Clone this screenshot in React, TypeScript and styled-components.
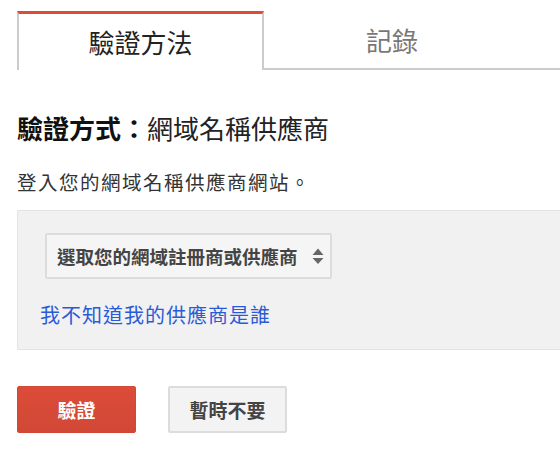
import React from "react";
import styled, { createGlobalStyle } from "styled-components";

const Global = createGlobalStyle`
  html, body { margin: 0; padding: 0; background: #fff; overflow: hidden; }
  body { font-family: "Noto Sans CJK TC", "Noto Sans", sans-serif; width: 560px; height: 450px; }
`;

const Page = styled.div`
  padding: 11px 0 0 17px;
`;

const Tabs = styled.div`
  display: flex;
  align-items: flex-end;
  height: 57px;
  border-bottom: 2px solid #ccc;
`;

const Tab = styled.div<{ $active?: boolean }>`
  box-sizing: border-box;
  display: flex;
  align-items: center;
  justify-content: center;
  font-size: 26px;
  height: 100%;
  ${(p) =>
    p.$active
      ? `
    width: 247px;
    height: 59px;
    margin-bottom: -2px;
    background: #fff;
    border-top: 3px solid #dd4b39;
    border-left: 2px solid #ccc;
    border-right: 2px solid #ccc;
    color: #222;
    padding-bottom: 2px;
  `
      : `
    width: 256px;
    color: #777;
  `}
`;

const Heading = styled.h2`
  margin: 40px 0 0 0;
  font-size: 26px;
  font-weight: normal;
  line-height: 36px;
  color: #222;
`;

const Strong = styled.span`
  font-weight: bold;
  color: #111;
`;

const Desc = styled.p`
  margin: 22px 0 0 0;
  font-size: 19.5px;
  letter-spacing: 1.5px;
  line-height: 28px;
  color: #333;
`;

const Box = styled.div`
  box-sizing: border-box;
  margin-top: 14px;
  height: 140px;
  background: #f1f1f1;
  border: 1px solid #e3e3e3;
  border-right: none;
  padding: 22px 0 0 22px;
`;

const Select = styled.div`
  box-sizing: border-box;
  display: flex;
  align-items: center;
  justify-content: space-between;
  margin-left: 5px;
  width: 287px;
  height: 46px;
  padding: 0 4px 0 10px;
  background: #f5f5f5;
  border: 2px solid #dcdcdc;
  border-radius: 2px;
  font-size: 18.5px;
  font-weight: bold;
  color: #444;
  white-space: nowrap;
`;

const Link = styled.a`
  display: block;
  margin-top: 22px;
  font-size: 20px;
  letter-spacing: 1px;
  line-height: 28px;
  color: #2a5bd7;
  text-decoration: none;
  cursor: pointer;
`;

const Buttons = styled.div`
  display: flex;
  gap: 32px;
  margin-top: 36px;
`;

const Button = styled.button<{ $primary?: boolean }>`
  box-sizing: border-box;
  width: 119px;
  height: 47px;
  border-radius: 2px;
  font-family: "Noto Sans CJK TC", "Noto Sans", sans-serif;
  font-size: 19px;
  cursor: pointer;
  ${(p) =>
    p.$primary
      ? `
    background: linear-gradient(#dd4b39, #d14836);
    border: 1px solid #d14836;
    color: #fff;
    font-weight: bold;
  `
      : `
    background: #f3f3f3;
    border: 2px solid #dcdcdc;
    color: #444;
    font-weight: 600;
  `}
`;

const Arrows = () => (
  <svg width="16" height="24" viewBox="0 0 16 24">
    <path d="M8 4.5 L13.5 11 L2.5 11 Z" fill="#666" />
    <path d="M2.5 14 L13.5 14 L8 20 Z" fill="#666" />
  </svg>
);

export default function App() {
  return (
    <>
      <Global />
      <Page>
        <Tabs>
          <Tab $active>驗證方法</Tab>
          <Tab>記錄</Tab>
        </Tabs>
        <Heading>
          <Strong>驗證方式：</Strong>網域名稱供應商
        </Heading>
        <Desc>登入您的網域名稱供應商網站。</Desc>
        <Box>
          <Select>
            選取您的網域註冊商或供應商
            <Arrows />
          </Select>
          <Link>我不知道我的供應商是誰</Link>
        </Box>
        <Buttons>
          <Button $primary>驗證</Button>
          <Button>暫時不要</Button>
        </Buttons>
      </Page>
    </>
  );
}
